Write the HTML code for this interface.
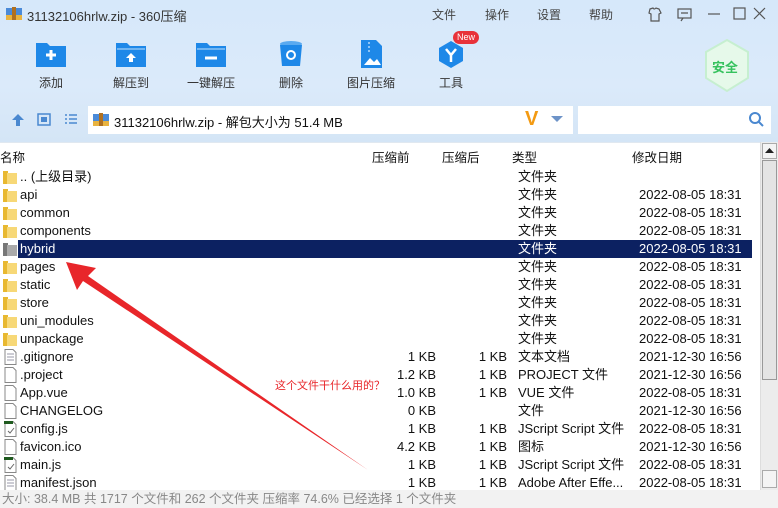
<!DOCTYPE html>
<html><head><meta charset="utf-8"><style>
*{margin:0;padding:0;box-sizing:border-box}
body{width:778px;height:508px;overflow:hidden;font-family:"Liberation Sans","Noto Sans CJK SC",sans-serif;font-size:12px;color:#111;position:relative;background:#fff}
.top{position:absolute;left:0;top:0;width:778px;height:142px;background:linear-gradient(#d6e8fa,#dbeafa 60%,#d4e5f6)}
.abs{position:absolute;white-space:nowrap}
.tb{position:absolute;top:40px;width:80px;text-align:center;font-size:12px;color:#333}
.tb svg{display:block;margin:0 auto 6px}
.row{position:absolute;left:0;width:752px;height:18px;line-height:18px;font-size:13px}
.row span{position:absolute;white-space:nowrap}
.sel{background:#0c2161;color:#fff}
</style></head><body>
<div class="top"></div>
<svg class="abs" style="left:6px;top:6px" width="16" height="16"><rect x="0" y="2" width="16" height="12" fill="#4a8ad8"/><rect x="0" y="9" width="16" height="5" fill="#e8b340"/><rect x="6" y="1" width="4" height="13" fill="#b07020"/></svg>
<div class="abs" style="left:27px;top:6px;font-size:13px;color:#333">31132106hrlw.zip - 360压缩</div>
<div class="abs" style="left:432px;top:6px;font-size:12px;color:#444">文件</div>
<div class="abs" style="left:485px;top:6px;color:#444">操作</div>
<div class="abs" style="left:537px;top:6px;color:#444">设置</div>
<div class="abs" style="left:589px;top:6px;color:#444">帮助</div>
<svg class="abs" style="left:646px;top:6px" width="120" height="16" fill="none" stroke="#555" stroke-width="1.2"><path d="M4 3l3-1q1 2 3 0l3 1 2 4-2 1v7H5V8L3 7z"/><rect x="32" y="3" width="13" height="9"/><path d="M35 7h7M37 12l-2 3"/><path d="M62 8h12"/><rect x="88" y="2" width="11" height="11"/><path d="M108 2l11 11M119 2l-11 11"/></svg>
<div class="tb" style="left:11px"><svg width="32" height="28"><path d="M1 3h11l3 3h16v21H1z" fill="#1e88e8"/><path d="M16 10v10M11 15h10" stroke="#fff" stroke-width="3"/></svg>添加</div>
<div class="tb" style="left:91px"><svg width="32" height="28"><path d="M1 3h11l3 3h16v21H1z" fill="#1e88e8"/><path d="M2 9h28" stroke="#8cc4f6" stroke-width="1.5"/><path d="M16 13l-5 5h3v4h4v-4h3z" fill="#fff"/></svg>解压到</div>
<div class="tb" style="left:171px"><svg width="32" height="28"><path d="M1 3h11l3 3h16v21H1z" fill="#1e88e8"/><path d="M2 9h28" stroke="#8cc4f6" stroke-width="1.5"/><path d="M10 18h12" stroke="#fff" stroke-width="3"/></svg>一键解压</div>
<div class="tb" style="left:251px"><svg width="32" height="28"><ellipse cx="16" cy="4" rx="11" ry="3" fill="#5aaaf0"/><path d="M5 5h22l-2 21H7z" fill="#1e88e8"/><circle cx="16" cy="15" r="4" fill="none" stroke="#fff" stroke-width="2"/></svg>删除</div>
<div class="tb" style="left:331px"><svg width="32" height="28"><path d="M6 0h15l6 6v22H6z" fill="#1e88e8"/><path d="M9 25l6-7 4 4 3-3 4 6z" fill="#fff"/><path d="M14 2v10" stroke="#8cc4f6" stroke-width="2" stroke-dasharray="2 2"/></svg>图片压缩</div>
<div class="tb" style="left:411px"><svg width="32" height="28"><path d="M16 1l12 7v13l-12 7-12-7V8z" fill="#1e88e8"/><path d="M11 9l5 6 5-6M16 15v7" stroke="#fff" stroke-width="2.5" fill="none"/></svg>工具</div>
<div class="abs" style="left:453px;top:31px;background:#e8323a;color:#fff;font-size:9px;border-radius:8px;padding:0 4px;line-height:13px">New</div>
<svg class="abs" style="left:703px;top:38px" width="48" height="56"><path d="M24 2l21 12v26L24 53 3 40V14z" fill="#e6f9ea" stroke="#c6efd0" stroke-width="2"/></svg>
<div class="abs" style="left:712px;top:57px;color:#36c25e;font-weight:bold;font-size:13px">安全</div>
<svg class="abs" style="left:11px;top:113px" width="70" height="14"><path d="M7 1l6 6H9v6H5V7H1z" fill="#4a88d0"/><rect x="27" y="1" width="12" height="11" fill="none" stroke="#4a88d0" stroke-width="1.5"/><rect x="30" y="4" width="6" height="5" fill="#4a88d0"/><path d="M54 2h2M54 6h2M54 10h2M58 2h8M58 6h8M58 10h8" stroke="#4a88d0" stroke-width="1.5"/></svg>
<div class="abs" style="left:88px;top:106px;width:485px;height:28px;background:#fff"></div>
<svg class="abs" style="left:93px;top:112px" width="16" height="16"><rect x="0" y="2" width="16" height="12" fill="#4a8ad8"/><rect x="0" y="9" width="16" height="5" fill="#e8b340"/><rect x="6" y="1" width="4" height="13" fill="#b07020"/></svg>
<div class="abs" style="left:114px;top:112px;font-size:13px">31132106hrlw.zip - 解包大小为 51.4 MB</div>
<div class="abs" style="left:525px;top:108px;font-size:20px;font-weight:bold;color:#f39a12">V</div>
<svg class="abs" style="left:551px;top:116px" width="12" height="8"><path d="M0 0h12L6 6z" fill="#6d93c8"/></svg>
<div class="abs" style="left:578px;top:106px;width:193px;height:28px;background:#fff"></div>
<svg class="abs" style="left:748px;top:111px" width="16" height="16" fill="none" stroke="#4a88d0" stroke-width="2"><circle cx="7" cy="7" r="5"/><path d="M11 11l4 4"/></svg>
<div class="abs" style="left:0;top:142px;width:760px;height:24px;background:#fff;border-top:1px solid #e0e8f0"></div>
<div class="abs" style="left:0;top:147px;font-size:12.5px">名称</div>
<div class="abs" style="left:372px;top:147px;font-size:12.5px">压缩前</div>
<div class="abs" style="left:442px;top:147px;font-size:12.5px">压缩后</div>
<div class="abs" style="left:512px;top:147px;font-size:12.5px">类型</div>
<div class="abs" style="left:632px;top:147px;font-size:12.5px">修改日期</div>
<div class="abs" style="left:760px;top:142px;width:18px;height:348px;background:#ececec;border-left:1px solid #ddd"></div>
<div class="abs" style="left:762px;top:143px;width:15px;height:16px;background:#f4f4f4;border:1px solid #aaa"></div>
<svg class="abs" style="left:765px;top:148px" width="9" height="5"><path d="M0 5L4.5 0 9 5z" fill="#222"/></svg>
<div class="abs" style="left:762px;top:160px;width:15px;height:220px;background:#e4e4e4;border:1px solid #999"></div>
<div class="abs" style="left:762px;top:470px;width:15px;height:18px;background:#f4f4f4;border:1px solid #aaa"></div>
<div id="rows"></div>
<script>
var F='folder',D='2022-08-05 18:31',E='2021-12-30 16:56';
var r=[['.. (上级目录)',F,'','','文件夹',''],['api',F,'','','文件夹',D],['common',F,'','','文件夹',D],['components',F,'','','文件夹',D],['hybrid','g','','','文件夹',D],['pages',F,'','','文件夹',D],['static',F,'','','文件夹',D],['store',F,'','','文件夹',D],['uni_modules',F,'','','文件夹',D],['unpackage',F,'','','文件夹',D],['.gitignore','t','1 KB','1 KB','文本文档',E],['.project','f','1.2 KB','1 KB','PROJECT 文件',E],['App.vue','f','1.0 KB','1 KB','VUE 文件',D],['CHANGELOG','f','0 KB','','文件',E],['config.js','j','1 KB','1 KB','JScript Script 文件',D],['favicon.ico','f','4.2 KB','1 KB','图标',E],['main.js','j','1 KB','1 KB','JScript Script 文件',D],['manifest.json','t','1 KB','1 KB','Adobe After Effe...',D]];
var h='';
r.forEach(function(x,i){var y=168+i*18;var ic='';
if(x[1]==F||x[1]=='g'){var c=x[1]==F?'#e8b830':'#777',c2=x[1]==F?'#f7d877':'#aaa';ic='<svg style="position:absolute;left:3px;top:2px" width="14" height="15"><rect x="0" y="1" width="5" height="13" fill="'+c+'"/><rect x="4" y="3" width="10" height="11" fill="'+c2+'"/></svg>';}
else{ic='<svg style="position:absolute;left:4px;top:1px" width="13" height="16"><path d="M1 .5h8l3 3v12H1z" fill="#fff" stroke="#888"/>'+(x[1]=='t'?'<path d="M3 5h7M3 8h7M3 11h7" stroke="#99a"/>':'')+(x[1]=='j'?'<rect x="0" y="0" width="9" height="3" fill="#1f5a1f"/><path d="M4 10l2 2 4-5" stroke="#666" fill="none"/>':'')+'</svg>';}
h+='<div class="row'+(x[0]=='hybrid'?' sel':'')+'" style="top:'+y+'px">'+ic+'<span style="left:20px">'+x[0]+'</span><span style="right:316px">'+x[2]+'</span><span style="right:245px">'+x[3]+'</span><span style="left:518px">'+x[4]+'</span><span style="left:639px">'+x[5]+'</span></div>';});
document.getElementById('rows').innerHTML=h;
</script>
<style>.sel{left:18px!important;width:734px!important}.sel span:first-of-type{left:2px!important}.sel svg{left:-15px!important}.sel span:nth-of-type(2){right:298px!important}.sel span:nth-of-type(4){left:500px!important}.sel span:nth-of-type(5){left:621px!important}</style>
<svg class="abs" style="left:0;top:0" width="778" height="508"><path d="M66 262L96 268 88 276 368 470 83 281 77 290z" fill="#e8262a"/></svg>
<div class="abs" style="left:275px;top:377px;color:#e8262a;font-size:11px">这个文件干什么用的？</div>
<div class="abs" style="left:0;top:490px;width:778px;height:18px;background:#f2f2f2;color:#888;font-size:12.5px;line-height:18px;padding-left:2px">大小: 38.4 MB 共 1717 个文件和 262 个文件夹 压缩率 74.6% 已经选择 1 个文件夹</div>
</body></html>
